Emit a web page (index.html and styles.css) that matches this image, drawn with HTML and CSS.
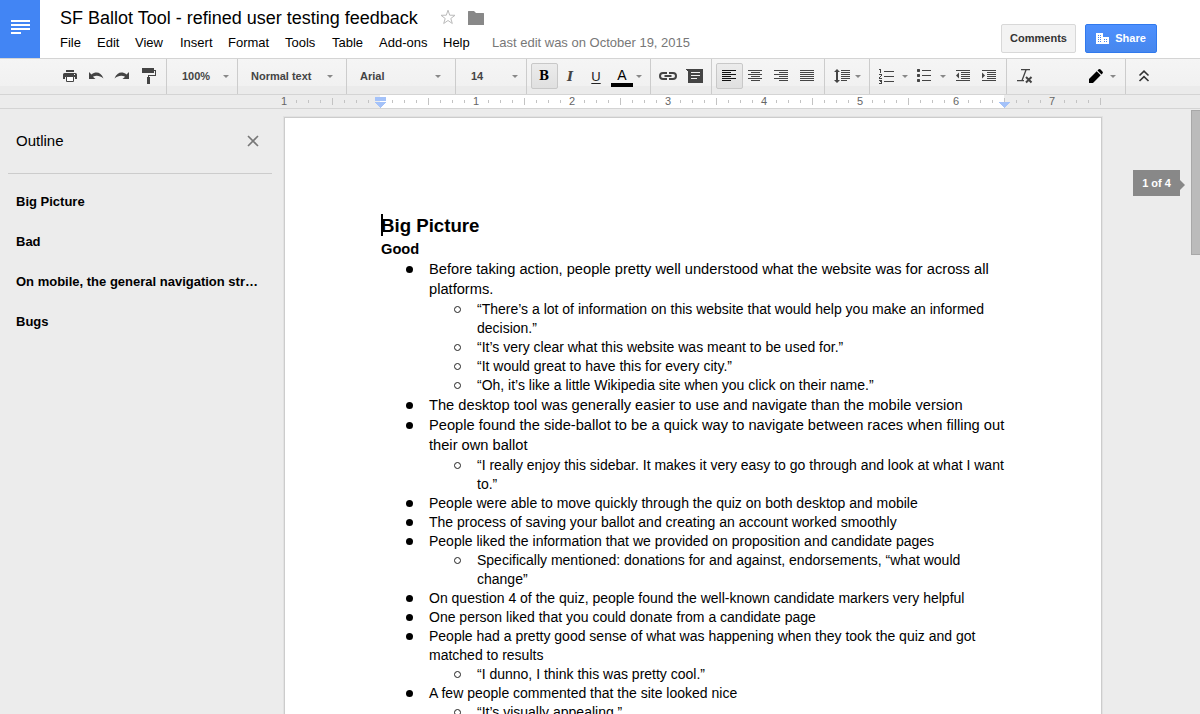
FILE: index.html
```
<!DOCTYPE html>
<html lang="en">
<head>
<meta charset="utf-8">
<title>SF Ballot Tool - refined user testing feedback</title>
<link rel="stylesheet" href="styles.css">
</head>
<body>
<header class="header">
  <div class="logo"><svg width="40" height="58" shape-rendering="crispEdges"><path fill="#fff" d="M11 20h19v2H11zM11 24h19v2H11zM11 28h19v2H11zM11 32h10v2H11z"/></svg></div>
  <div class="heading">
    <div class="title-row">
      <h1 class="title">SF Ballot Tool - refined user testing feedback</h1>
      <svg class="star" width="16" height="16" viewBox="0 0 16 16"><path d="M8 1.2l1.700 5 5.300.1-4.200 3.200 1.500 5L8 11.500l-4.300 3 1.500-5L1 6.300l5.300-.1z" fill="none" stroke="#bbb"/></svg>
      <svg class="folder" width="16" height="14"><path fill="#888" d="M0 .5Q0 0 .5 0H6l2 2h7.500q.5 0 .5.500V14H0z"/></svg>
    </div>
    <nav class="menu"><span class="m-file">File</span><span class="m-edit">Edit</span><span class="m-view">View</span><span class="m-insert">Insert</span><span class="m-format">Format</span><span class="m-tools">Tools</span><span class="m-table">Table</span><span class="m-addons">Add-ons</span><span class="m-help">Help</span><span class="last-edit">Last edit was on October 19, 2015</span></nav>
  </div>
  <div class="actions">
    <button class="btn comments">Comments</button>
    <button class="btn share"><svg width="13" height="11" shape-rendering="crispEdges"><path fill="#fff" d="M0 0h7v4h6v7H0z"/><path fill="#4787ed" d="M2 2h1v1H2zM4 2h1v1H4zM2 4h1v1H2zM4 4h1v1H4zM2 6h1v1H2zM4 6h1v1H4zM2 8h1v1H2zM4 8h1v1H4zM8 6h1v1H8zM10 6h1v1h-1zM8 8h1v1H8zM10 8h1v1h-1z"/></svg>Share</button>
  </div>
</header>

<div class="toolbar">
  <div class="group g-file">
    <span class="tool"><svg width="16" height="14" viewBox="0 0 16 14"><path fill="#444" d="M4 1h8v2H4zM2.500 4h11Q15 4 15 5.500V10h-2V8H3v2H1V5.500Q1 4 2.500 4z"/><path fill="#fff" stroke="#444" d="M4.500 7.500v5h7v-5z"/><path fill="#fff" d="M12 5h1v1h-1z"/></svg></span>
    <span class="tool"><svg width="16" height="14" viewBox="0 0 16 14"><path fill="#444" d="M1 3v7h6.500L4.900 7.700C8 5.900 12 6.300 15.500 9.500 13 3.200 8 1.900 3.500 5.500z"/></svg></span>
    <span class="tool"><svg width="16" height="14" viewBox="0 0 16 14"><path fill="#444" d="M15 3v7H8.500l2.600-2.300C8 5.900 4 6.300.5 9.500 3 3.200 8 1.900 12.500 5.500z"/></svg></span>
    <span class="tool tool-paint"><svg width="16" height="16" viewBox="0 0 16 16" shape-rendering="crispEdges"><path fill="#444" d="M1 0h12v5H1zM6 9h3v7H6zM13 2h2v6H8v1H7V7h7V3h-1z"/></svg></span>
  </div>
  <div class="group select g-zoom"><span>100%</span><i class="caret"></i></div>
  <div class="group select g-style"><span>Normal text</span><i class="caret"></i></div>
  <div class="group select g-font"><span>Arial</span><i class="caret"></i></div>
  <div class="group select g-size"><span>14</span><i class="caret"></i></div>
  <div class="group g-format">
    <span class="tool active glyph bold">B</span><span class="tool glyph italic">I</span><span class="tool glyph underline">U</span>
    <span class="tool color"><span>A</span><i class="swatch"></i></span><i class="caret"></i>
  </div>
  <div class="group g-insert">
    <span class="tool"><svg width="18" height="8" viewBox="0 0 18 8"><path fill="none" stroke="#444" stroke-width="2" d="M8 1H4a3 3 0 0 0 0 6h4M10 1h4a3 3 0 0 1 0 6h-4M5.500 4h7"/></svg></span>
    <span class="tool"><svg width="18" height="15" viewBox="0 0 18 15" shape-rendering="crispEdges"><path fill="#444" d="M0 0h18v14H3V3z"/><path fill="#f1f1f1" d="M6 3h9v1H6zM6 6h9v1H6zM6 9h6v1H6z"/></svg></span>
  </div>
  <div class="group g-align">
    <span class="tool active"><svg width="14" height="12" shape-rendering="crispEdges"><path fill="#111" d="M0 0h14v1H0zM0 2h9v1H0zM0 4h14v1H0zM0 6h9v1H0zM0 8h14v1H0zM0 10h9v1H0z"/></svg></span>
    <span class="tool"><svg width="14" height="12" shape-rendering="crispEdges"><path fill="#444" d="M0 0h14v1H0zM3 2h9v1H3zM0 4h14v1H0zM3 6h9v1H3zM0 8h14v1H0zM3 10h9v1H3z"/></svg></span>
    <span class="tool"><svg width="14" height="12" shape-rendering="crispEdges"><path fill="#444" d="M0 0h14v1H0zM5 2h9v1H5zM0 4h14v1H0zM5 6h9v1H5zM0 8h14v1H0zM5 10h9v1H5z"/></svg></span>
    <span class="tool"><svg width="14" height="12" shape-rendering="crispEdges"><path fill="#444" d="M0 0h14v1H0zM0 2h14v1H0zM0 4h14v1H0zM0 6h14v1H0zM0 8h14v1H0zM0 10h14v1H0z"/></svg></span>
  </div>
  <div class="group g-spacing">
    <span class="tool"><svg width="17" height="14"><path fill="#444" d="M3 0l3 3H4v8h2l-3 3-3-3h2V3H0z"/><path fill="#444" shape-rendering="crispEdges" d="M7 1h9v1H7zM7 3h9v1H7zM7 5h9v1H7zM7 7h9v1H7zM7 9h9v1H7zM7 11h6v1H7z"/></svg></span><i class="caret"></i>
  </div>
  <div class="group g-list">
    <span class="tool"><svg width="15" height="15" shape-rendering="crispEdges"><path fill="#444" d="M5 2h10v1H5zM5 7h10v1H5zM5 12h10v1H5zM0 0h2v4H1V1H0zM0 5h3v2H2v1H1v1h2v1H0V8h1V7h1V6H0zM0 11h3v4H0v-1h2v-1H1v-1H0z"/></svg></span><i class="caret"></i>
    <span class="tool tool-bullets"><svg width="14" height="14"><path fill="#444" shape-rendering="crispEdges" d="M5 1h9v1H5zM5 6h9v1H5zM5 11h9v1H5z"/><path fill="#444" d="M0 .5L.5 0h2l.5.500v2l-.5.500h-2L0 2.500zM0 5.500L.5 5h2l.5.500v2l-.5.500h-2L0 7.500zM0 10.500l.5-.5h2l.5.500v2l-.5.500h-2l-.5-.5z"/></svg></span><i class="caret"></i>
    <span class="tool"><svg width="14" height="12"><path fill="#444" shape-rendering="crispEdges" d="M0 0h14v1H0zM5 2h9v1H5zM5 4h9v1H5zM5 6h9v1H5zM5 8h9v1H5zM0 10h14v1H0z"/><path fill="#444" d="M0 5.500L3 2.500v6z"/></svg></span>
    <span class="tool"><svg width="14" height="12"><path fill="#444" shape-rendering="crispEdges" d="M0 0h14v1H0zM5 2h9v1H5zM5 4h9v1H5zM5 6h9v1H5zM5 8h9v1H5zM0 10h14v1H0z"/><path fill="#444" d="M3 5.500L0 2.500v6z"/></svg></span>
  </div>
  <div class="group g-clear">
    <span class="tool"><svg width="16" height="15"><path fill="none" stroke="#444" stroke-width="1.300" d="M4 .7h9M9 1L5 11.500M0 11.700h7"/><path fill="none" stroke="#444" stroke-width="2" d="M9 8l5.500 5.500M14.500 8L9 13.500"/></svg></span>
    <span class="tool tool-pencil"><svg width="14" height="14"><path d="M0 10L7.700 2.300l4 4L4 14H0zM8.500 1.500L9.400.6q1.100-1 2.200 0L13.400 2.400q1 1.100 0 2.200l-.9.900z"/></svg></span><i class="caret"></i>
  </div>
  <div class="group g-collapse"><svg width="12" height="12"><path fill="none" stroke="#333" stroke-width="1.600" d="M1.500 5.500L6 1.200l4.500 4.300M1.500 11L6 6.700l4.500 4.300"/></svg></div>
</div>

<div class="ruler">
  <svg width="1200" height="13" shape-rendering="crispEdges">
    <defs><pattern id="inch" x="380" width="96" height="13" patternUnits="userSpaceOnUse"><path fill="#c3c3c3" d="M12 5h1v3h-1zM24 5h1v3h-1zM36 5h1v3h-1zM48 3h1v7h-1zM60 5h1v3h-1zM72 5h1v3h-1zM84 5h1v3h-1z"/></pattern></defs>
    <path fill="#fff" d="M380 0h624v13H380z"/>
    <path fill="url(#inch)" d="M290 0h811v13H290z"/>
    <path fill="#a4c2f9" d="M375 2h11v4h-11zM375 7h11l-5.500 6zM999 7h11l-5.500 6z"/>
    <g class="ruler-num"><text x="284" y="10">1</text><text x="476" y="10">1</text><text x="572" y="10">2</text><text x="668" y="10">3</text><text x="764" y="10">4</text><text x="860" y="10">5</text><text x="956" y="10">6</text><text x="1052" y="10">7</text></g>
  </svg>
</div>

<main class="workspace">
  <aside class="outline">
    <div class="outline-head"><span>Outline</span><svg width="12" height="12"><path d="M1 1l10 10M11 1L1 11" stroke="#777" stroke-width="1.600"/></svg></div>
    <div class="outline-item">Big Picture</div>
    <div class="outline-item">Bad</div>
    <div class="outline-item">On mobile, the general navigation str…</div>
    <div class="outline-item">Bugs</div>
  </aside>
  <article class="page">
    <div class="cursor"></div>
    <h2>Big Picture</h2>
    <h3>Good</h3>
    <ul class="list">
      <li class="l1 tall spaced">Before taking action, people pretty well understood what the website was for across all<br>platforms.</li>
      <li class="l2">“There’s a lot of information on this website that would help you make an informed<br>decision.”</li>
      <li class="l2">“It’s very clear what this website was meant to be used for.”</li>
      <li class="l2">“It would great to have this for every city.”</li>
      <li class="l2">“Oh, it’s like a little Wikipedia site when you click on their name.”</li>
      <li class="l1 tall">The desktop tool was generally easier to use and navigate than the mobile version</li>
      <li class="l1 tall spaced">People found the side-ballot to be a quick way to navigate between races when filling out<br>their own ballot</li>
      <li class="l2">“I really enjoy this sidebar. It makes it very easy to go through and look at what I want<br>to.”</li>
      <li class="l1">People were able to move quickly through the quiz on both desktop and mobile</li>
      <li class="l1">The process of saving your ballot and creating an account worked smoothly</li>
      <li class="l1">People liked the information that we provided on proposition and candidate pages</li>
      <li class="l2">Specifically mentioned: donations for and against, endorsements, “what would<br>change”</li>
      <li class="l1">On question 4 of the quiz, people found the well-known candidate markers very helpful</li>
      <li class="l1">One person liked that you could donate from a candidate page</li>
      <li class="l1">People had a pretty good sense of what was happening when they took the quiz and got<br>matched to results</li>
      <li class="l2">“I dunno, I think this was pretty cool.”</li>
      <li class="l1">A few people commented that the site looked nice</li>
      <li class="l2">“It’s visually appealing.”</li>
    </ul>
  </article>
  <div class="page-indicator">1 of 4</div>
  <div class="scrollbar"></div>
</main>
</body>
</html>
```
FILE: styles.css
```
*, *::before { box-sizing: border-box; }
body { margin: 0; width: 1200px; height: 714px; overflow: hidden; display: flex; flex-direction: column; background: #ececec; font-family: "Liberation Sans", Arial, sans-serif; color: #000; }
svg { display: block; flex: none; }

.header { height: 58px; flex: none; display: flex; background: #fff; }
.logo { width: 40px; background: #4285f4; }
.heading { flex: 1; padding-left: 20px; }
.title-row { display: flex; height: 35px; padding-top: 7px; }
.title { margin: 0; width: 380px; font-size: 18px; line-height: 22px; font-weight: 400; white-space: nowrap; }
.star { margin-top: 2px; }
.folder { margin: 4px 0 0 12px; }
.menu { display: flex; font-size: 13px; line-height: 16px; white-space: nowrap; }
.m-file { width: 37px; }
.m-edit { width: 38px; }
.m-view { width: 45px; }
.m-insert { width: 48px; }
.m-format { width: 57px; }
.m-tools { width: 47px; }
.m-table { width: 47px; }
.m-addons { width: 64px; }
.m-help { width: 49px; }
.last-edit { color: #777; }
.actions { display: flex; gap: 9px; padding: 24px 43px 0 0; }
.btn { display: flex; align-items: center; justify-content: center; height: 29px; padding: 0; border: 1px solid #d8d8d8; border-radius: 2px; font: bold 11px/27px "Liberation Sans", Arial, sans-serif; }
.comments { width: 75px; background: #f3f3f3; color: #333; }
.share { width: 72px; gap: 6px; border-color: #3079ed; background: linear-gradient(#4d90fe, #4787ed); color: #fff; }

.toolbar { height: 37px; flex: none; display: flex; border: solid #d4d4d4; border-width: 1px 0; background: linear-gradient(#f5f5f5, #f1f1f1 27px, #ebebeb 27px); }
.group { display: flex; align-items: center; flex: none; padding-bottom: 1px; border-right: 1px solid #ccc; }
.tool { display: flex; align-items: center; justify-content: center; width: 26px; height: 26px; flex: none; }
.active { width: 27px; margin-right: -1px; padding-right: 1px; border: 1px solid #c8c8c8; border-radius: 2px; background: linear-gradient(#ececec, #e0e0e0); }
.caret { border: 3px solid transparent; border-top: 3px solid #888; border-bottom: 0; flex: none; }
.g-file { width: 167px; padding-left: 57px; }
.tool-paint { width: 28px; }
.select { font-weight: bold; font-size: 11px; color: #444; justify-content: space-between; }
.g-zoom { width: 71px; padding: 0 8px 1px 15px; }
.g-style { width: 109px; padding: 0 13px 1px; }
.g-font { width: 109px; padding: 0 14px 1px 13px; }
.g-size { width: 71px; padding: 0 8px 1px 15px; }
.g-format { width: 124px; padding-left: 4px; }
.glyph { font: bold 12px "DejaVu Serif", serif; }
.italic { font-style: italic; font-size: 13px; color: #444; }
.underline { font-family: "Liberation Sans", sans-serif; font-size: 13px; font-weight: 400; text-decoration: underline; text-underline-offset: 2px; color: #222; }
.color { flex-direction: column; justify-content: flex-start; padding-top: 4px; font-size: 14px; line-height: 16px; }
.swatch { width: 22px; height: 4px; background: #000; }
.g-format .caret { margin-left: 1px; }
.g-insert { width: 61px; padding-left: 4px; }
.g-align { width: 113px; padding-left: 4px; }
.g-spacing { width: 45px; padding-left: 4px; }
.g-list { width: 137px; padding-left: 3px; }
.g-list .caret { margin-left: 3px; }
.tool-bullets { margin-left: 3px; }
.g-list .tool-bullets + .caret { margin-right: 4px; }
.g-clear { width: 119px; padding-left: 5px; }
.tool-pencil { margin-left: 45px; }
.g-clear .caret { margin-left: 1px; }
.g-collapse { padding-left: 12px; border: 0; }

.ruler { height: 14px; flex: none; border-bottom: 1px solid #d4d4d4; }
.ruler-num { font-size: 11px; fill: #666; text-anchor: middle; }

.workspace { position: relative; flex: 1; display: flex; min-height: 0; }
.outline { width: 284px; flex: none; padding-left: 8px; }
.outline-head { display: flex; justify-content: space-between; align-items: center; width: 264px; height: 65px; padding: 0 13px 0 8px; border-bottom: 1px solid #ccc; font-size: 15px; }
.outline-head span { padding-bottom: 2px; }
.outline-item { height: 40px; padding-left: 8px; font-weight: bold; font-size: 13px; line-height: 40px; white-space: nowrap; }
.outline-head + .outline-item { margin-top: 8px; }
.page { position: relative; width: 818px; margin-top: 8px; padding: 97px 0 0 96px; flex: none; overflow: hidden; border: 1px solid #ccc; border-bottom: 0; background: #fff; box-shadow: 0 0 0 1px #e2e2e2; }
.cursor { position: absolute; left: 96px; top: 96px; width: 2px; height: 22px; background: #000; }
h2 { margin: 0 0 2px; font-size: 18.670px; line-height: 22px; }
h3 { margin: 0; font-size: 14.670px; line-height: 20px; }
.list { margin: 0; padding: 0; list-style: none; line-height: 19px; white-space: nowrap; }
.l1, .l2 { display: flow-root; position: relative; padding-left: 48px; font-size: 14px; }
.l2 { padding-left: 96px; }
.tall { font-size: 14.670px; line-height: 20px; }
.spaced { padding-bottom: 1px; }
.l1::before, .l2::before { content: ""; position: absolute; left: 25px; top: 6px; width: 7px; height: 7px; border-radius: 50%; background: #000; }
.tall::before { top: 7px; }
.l2::before { left: 73px; background: none; border: 1px solid #222; }
.page-indicator { position: absolute; left: 1133px; top: 61px; width: 47px; height: 26px; background: #888; color: #fff; font-weight: bold; font-size: 11px; line-height: 26px; text-align: center; }
.page-indicator::after { content: ""; position: absolute; left: 47px; top: 10px; border: 5px solid transparent; border-left-color: #888; border-right: 0; }
.scrollbar { position: absolute; left: 1191px; top: 1px; width: 9px; height: 145px; border: 1px solid #a8a8a8; border-right: 0; background: #bbb; }
```
